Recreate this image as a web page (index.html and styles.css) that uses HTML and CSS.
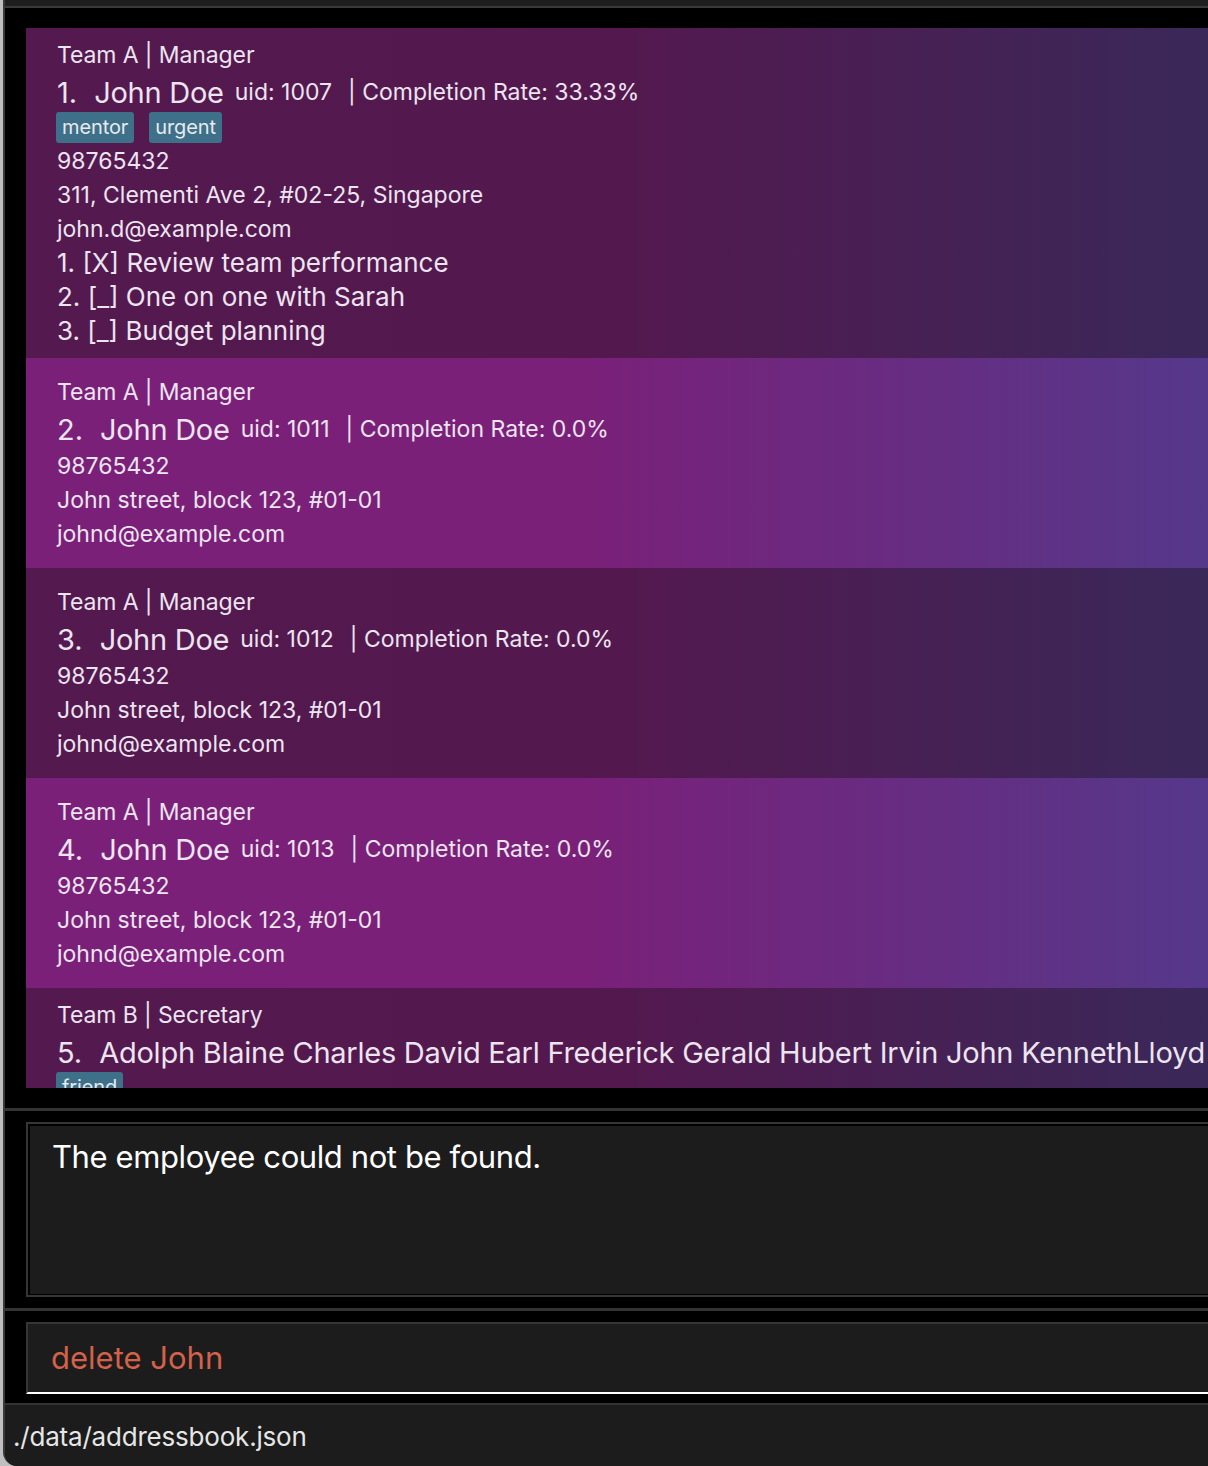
FILE: index.html
```html
<!DOCTYPE html>
<html>
<head>
<meta charset="utf-8">
<link rel="stylesheet" href="styles.css">
</head>
<body>
<div class="window">
  <div class="menubar"></div>
  <div class="list-section">
    <div class="list">
      <div class="card dark">
        <div class="team">Team A | Manager</div>
        <div class="name-row"><span class="idx">1.</span><span class="name">John Doe</span><span class="uid">uid: 1007</span><span class="rate">| Completion Rate: 33.33%</span></div>
        <div class="tags"><span class="tag">mentor</span><span class="tag">urgent</span></div>
        <div class="line">98765432</div>
        <div class="line">311, Clementi Ave 2, #02-25, Singapore</div>
        <div class="line">john.d@example.com</div>
        <div class="task">1. [X] Review team performance</div>
        <div class="task">2. [_] One on one with Sarah</div>
        <div class="task">3. [_] Budget planning</div>
      </div>
      <div class="card light">
        <div class="team">Team A | Manager</div>
        <div class="name-row"><span class="idx">2.</span><span class="name">John Doe</span><span class="uid">uid: 1011</span><span class="rate">| Completion Rate: 0.0%</span></div>
        <div class="line">98765432</div>
        <div class="line">John street, block 123, #01-01</div>
        <div class="line">johnd@example.com</div>
      </div>
      <div class="card dark">
        <div class="team">Team A | Manager</div>
        <div class="name-row"><span class="idx">3.</span><span class="name">John Doe</span><span class="uid">uid: 1012</span><span class="rate">| Completion Rate: 0.0%</span></div>
        <div class="line">98765432</div>
        <div class="line">John street, block 123, #01-01</div>
        <div class="line">johnd@example.com</div>
      </div>
      <div class="card light">
        <div class="team">Team A | Manager</div>
        <div class="name-row"><span class="idx">4.</span><span class="name">John Doe</span><span class="uid">uid: 1013</span><span class="rate">| Completion Rate: 0.0%</span></div>
        <div class="line">98765432</div>
        <div class="line">John street, block 123, #01-01</div>
        <div class="line">johnd@example.com</div>
      </div>
      <div class="card dark">
        <div class="team">Team B | Secretary</div>
        <div class="name-row"><span class="idx">5.</span><span class="name">Adolph Blaine Charles David Earl Frederick Gerald Hubert Irvin John KennethLloyd Martin Nero Oliver Paul Quincy Randolph Sherman</span></div>
        <div class="tags"><span class="tag">friend</span></div>
        <div class="line">98765432</div>
        <div class="line">John street, block 123, #01-01</div>
        <div class="line">adolph@example.com</div>
      </div>
    </div>
  </div>
  <div class="sep"></div>
  <div class="result-section">
    <div class="result-box">
      <div class="result-inner">The employee could not be found.</div>
    </div>
  </div>
  <div class="sep"></div>
  <div class="command-section">
    <div class="command-box">delete John</div>
  </div>
  <div class="status">./data/addressbook.json</div>
</div>
</body>
</html>
```
FILE: styles.css
```css
html, body {
  margin: 0;
  padding: 0;
  background: #bfbfbf;
  overflow: hidden;
  height: 1466px;
}
body {
  font-family: "Inter", "Liberation Sans", sans-serif;
}
.window {
  margin-left: 3px;
  width: 1205px;
  height: 1466px;
  background: #000;
  border-left: 2px solid #3a3a3a;
  border-bottom-left-radius: 14px;
  overflow: hidden;
  display: flex;
  flex-direction: column;
}
.menubar {
  height: 6px;
  background: #1e1e1e;
  border-bottom: 2px solid #3a3a3a;
  flex: none;
}
.list-section {
  padding: 20px 0 20px 21px;
  flex: none;
}
.list {
  height: 1060px;
  overflow: hidden;
}
.card {
  box-sizing: border-box;
  min-height: 210px;
  padding: 10px 0 10px 31px;
  display: flex;
  flex-direction: column;
  justify-content: center;
  color: #ece4ef;
  white-space: nowrap;
  overflow: hidden;
}
.card.dark {
  background: linear-gradient(to right, #54194f 0, #53194f 600px, #3a2859 1182px);
}
.card.light {
  background: linear-gradient(to right, #7b2079 0, #7a2079 560px, #55388a 1182px);
}
.team {
  height: 34px;
  line-height: 34px;
  font-size: 23px;
  letter-spacing: -0.1px;
}
.name-row {
  height: 40px;
  display: flex;
  align-items: center;
}
.idx {
  font-size: 29px;
  margin-right: 17px;
}
.name {
  font-size: 29px;
  letter-spacing: -0.25px;
  margin-right: 11px;
}
.uid {
  font-size: 23px;
  margin-right: 16px;
}
.rate {
  font-size: 23px;
}
.tags {
  height: 32px;
  display: flex;
  gap: 15px;
  margin-left: -1px;
}
.tag {
  height: 31px;
  line-height: 31px;
  padding: 0 6px;
  background: #3e7089;
  border-radius: 3px;
  font-size: 20px;
  letter-spacing: -0.1px;
  color: #e8eaee;
}
.line {
  height: 34px;
  line-height: 34px;
  font-size: 23px;
}
.task {
  height: 34px;
  line-height: 34px;
  font-size: 26px;
}
.sep {
  height: 3px;
  background: #333;
  flex: none;
}
.result-section {
  padding: 11px 0 11px 21px;
  flex: none;
}
.result-box {
  height: 175px;
  box-sizing: border-box;
  border: 2px solid #363636;
  border-right: none;
  padding: 2px 0 1px 2px;
  background: #000;
}
.result-inner {
  height: 100%;
  background: #1c1c1c;
  color: #fff;
  font-size: 31px;
  letter-spacing: -0.4px;
  padding: 12px 0 0 22px;
  box-sizing: border-box;
}
.command-section {
  padding: 11px 0 9px 21px;
  flex: none;
}
.command-box {
  height: 72px;
  box-sizing: border-box;
  border-top: 2px solid #363636;
  border-left: 2px solid #363636;
  border-bottom: 2px solid #fff;
  background: #1c1c1c;
  color: #d4614a;
  font-size: 31px;
  line-height: 68px;
  padding-left: 23px;
}
.status {
  flex: 1;
  border-top: 2px solid #333;
  background: #1c1c1c;
  color: #e6e6e6;
  font-size: 26px;
  letter-spacing: -0.2px;
  padding-left: 8px;
  line-height: 64px;
}
```
